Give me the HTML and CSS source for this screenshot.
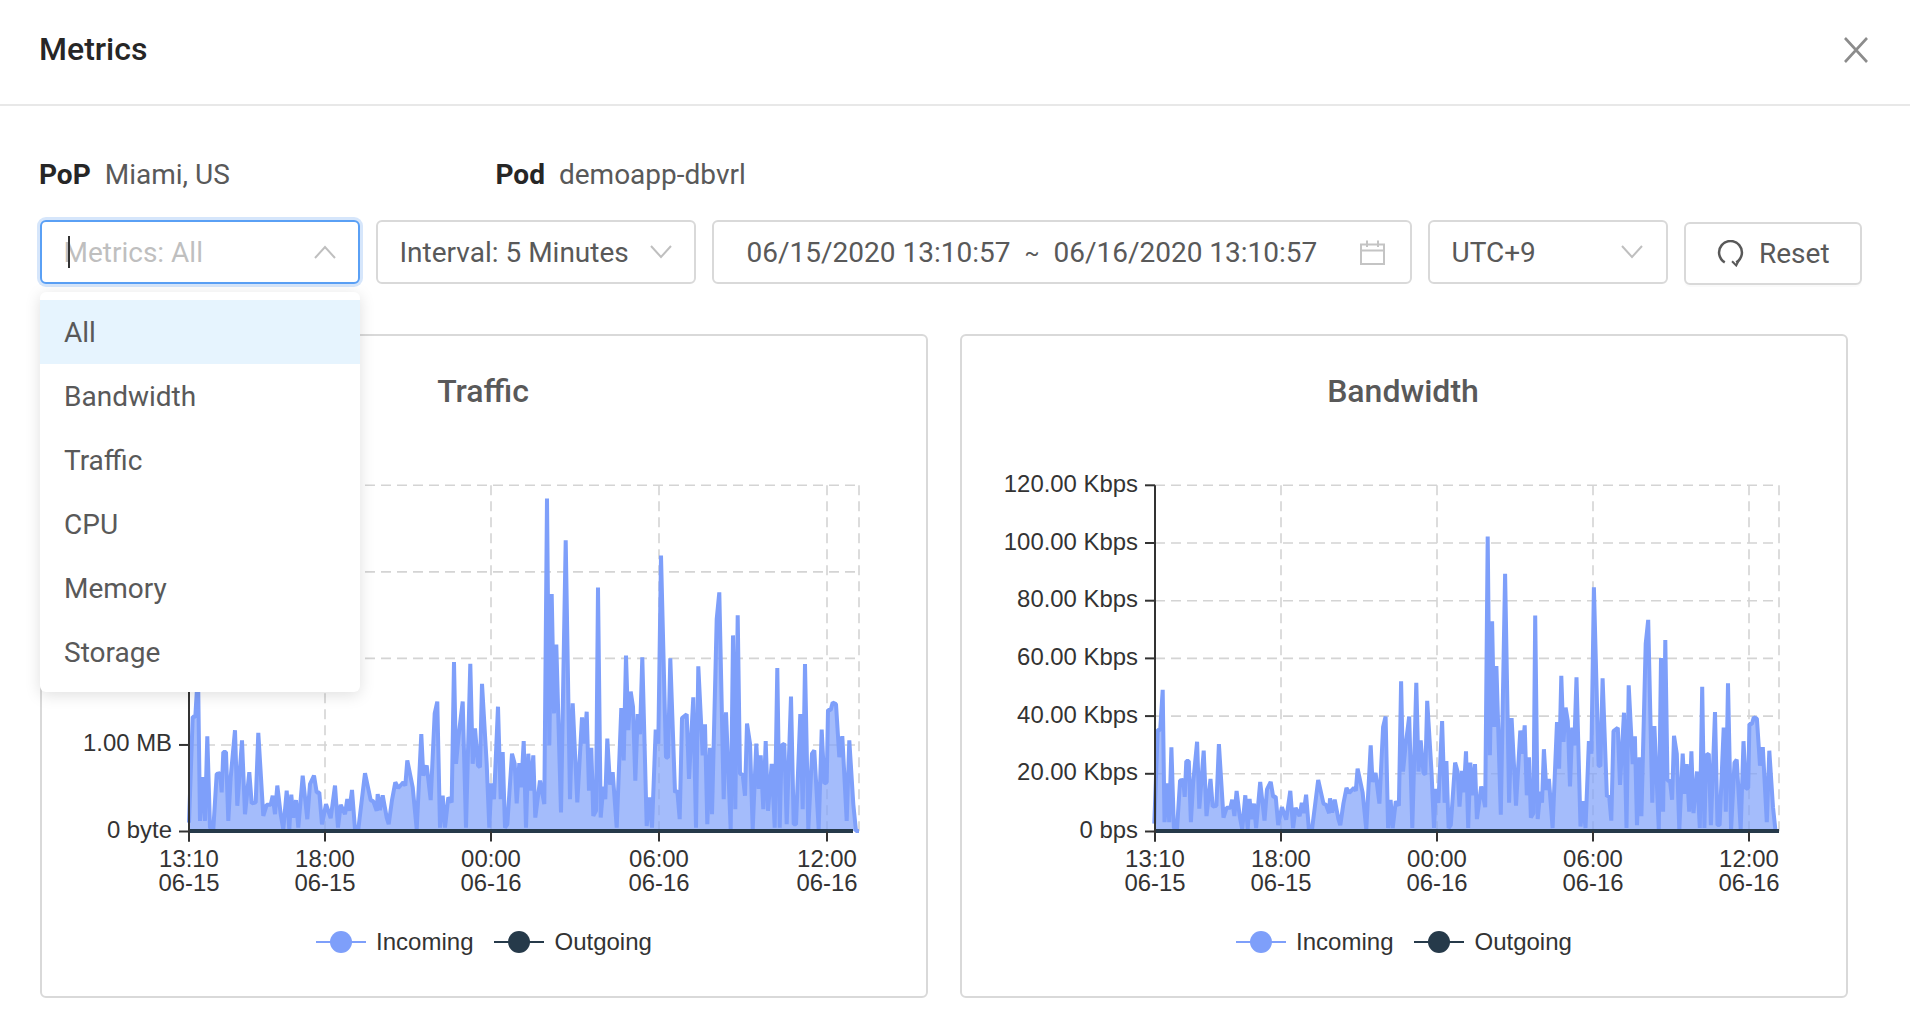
FILE: index.html
```html
<!DOCTYPE html>
<html lang="en">
<head>
<meta charset="utf-8">
<title>Metrics</title>
<link rel="stylesheet" href="styles.css">
</head>
<body>
<header class="modal-header">
  <h1 class="modal-title">Metrics</h1>
  <svg class="close-icon" viewBox="0 0 24 26" width="24" height="26" aria-label="Close">
    <path d="M1 1L23 25M23 1L1 25" fill="none" stroke="#8c8c8c" stroke-width="2.6"/>
  </svg>
</header>
<main class="modal-body">
  <div class="info-row">
    <div class="info-item info-pop"><span class="info-label">PoP</span><span class="info-value">Miami, US</span></div>
    <div class="info-item"><span class="info-label">Pod</span><span class="info-value">demoapp-dbvrl</span></div>
  </div>
  <div class="toolbar">
    <div class="control control-select control-focused">
      <span class="placeholder">Metrics: All</span>
      <span class="caret"></span>
      <svg class="chevron" viewBox="0 0 22 14" width="22" height="14"><path d="M1 13L11 2L21 13" fill="none" stroke="#bfbfbf" stroke-width="2"/></svg>
      <ul class="dropdown">
        <li class="dropdown-item dropdown-item-active">All</li>
        <li class="dropdown-item">Bandwidth</li>
        <li class="dropdown-item">Traffic</li>
        <li class="dropdown-item">CPU</li>
        <li class="dropdown-item">Memory</li>
        <li class="dropdown-item">Storage</li>
      </ul>
    </div>
    <div class="control control-select">
      <span class="control-text">Interval: 5 Minutes</span>
      <svg class="chevron" viewBox="0 0 22 14" width="22" height="14"><path d="M1 1L11 12L21 1" fill="none" stroke="#bfbfbf" stroke-width="2"/></svg>
    </div>
    <div class="control control-date">
      <span class="control-text">06/15/2020 13:10:57</span>
      <span class="date-sep">~</span>
      <span class="control-text">06/16/2020 13:10:57</span>
      <svg class="calendar" viewBox="0 0 25 25" width="25" height="25"><path d="M1 4.5H24V24H1ZM1 10.5H24M7 0.5V7M18 0.5V7" fill="none" stroke="#c4c4c4" stroke-width="2"/></svg>
    </div>
    <div class="control control-select control-tz">
      <span class="control-text">UTC+9</span>
      <svg class="chevron" viewBox="0 0 22 14" width="22" height="14"><path d="M1 1L11 12L21 1" fill="none" stroke="#bfbfbf" stroke-width="2"/></svg>
    </div>
    <button class="reset-button" type="button">
      <svg class="reset-icon" viewBox="0 0 26 26" width="27" height="27"><path d="M7.5 21.5A11 11 0 1 1 18.5 21.5" fill="none" stroke="#595959" stroke-width="2.4"/><path d="M21.5 18.5L18.5 24.5L14.5 20.5" fill="none" stroke="#595959" stroke-width="2"/></svg>
      <span>Reset</span>
    </button>
  </div>
  <div class="charts">
    <section class="card">
      <h2 class="card-title">Traffic</h2>
      <svg class="chart" id="chart-traffic" width="884" height="440"></svg>
      <div class="legend">
        <div class="legend-item"><span class="legend-mark legend-incoming"></span>Incoming</div>
        <div class="legend-item"><span class="legend-mark legend-outgoing"></span>Outgoing</div>
      </div>
    </section>
    <section class="card">
      <h2 class="card-title">Bandwidth</h2>
      <svg class="chart" id="chart-bandwidth" width="884" height="440"></svg>
      <div class="legend">
        <div class="legend-item"><span class="legend-mark legend-incoming"></span>Incoming</div>
        <div class="legend-item"><span class="legend-mark legend-outgoing"></span>Outgoing</div>
      </div>
    </section>
  </div>
</main>
<script src="chart.js"></script>
</body>
</html>
```
FILE: styles.css
```css
* { box-sizing: border-box; }
html, body { margin: 0; padding: 0; }
body {
  width: 1910px;
  height: 1028px;
  overflow: hidden;
  background: #fff;
  font-family: Roboto, "Noto Sans", sans-serif;
  font-size: 28px;
  color: #595959;
}
.modal-header {
  height: 106px;
  padding: 0 42px 0 39px;
  border-bottom: 2px solid #e8e8e8;
  display: flex;
  align-items: center;
  justify-content: space-between;
}
.modal-title {
  margin: 0 0 6px;
  font-size: 32px;
  font-weight: 500;
  color: #262626;
}
.close-icon { display: block; margin-bottom: 5px; }
.modal-body { padding: 48px 48px 0 40px; }
.info-row {
  display: flex;
  height: 40px;
  align-items: center;
  margin-left: -1px;
}
.info-item { display: flex; gap: 14px; }
.info-pop { width: 456.5px; }
.info-label { font-weight: 700; color: #262626; }
.toolbar {
  display: flex;
  align-items: flex-start;
  gap: 16px;
  margin-top: 26px;
}
.control {
  position: relative;
  height: 64px;
  border: 2px solid #d9d9d9;
  border-radius: 6px;
  display: flex;
  align-items: center;
  background: #fff;
}
.control-select {
  width: 320px;
  padding: 0 22px 0 21.5px;
  justify-content: space-between;
}
.control-focused {
  border-color: #5aa0f5;
  box-shadow: 0 0 0 3px #d6e6fb;
}
.control-date {
  width: 700px;
  padding: 0 25px 0 32.5px;
}
.control-tz { width: 240px; padding-right: 23px; }
.placeholder { color: #bfbfbf; }
.caret {
  position: absolute;
  left: 26px;
  top: 14px;
  width: 2px;
  height: 32px;
  background: #333;
}
.date-sep { width: 43px; text-align: center; font-size: 22px; }
.calendar { margin-left: auto; display: block; }
.chevron { display: block; flex: none; }
.dropdown {
  position: absolute;
  z-index: 2;
  top: 70px;
  left: -2px;
  width: 320px;
  height: 400px;
  margin: 0;
  padding: 8px 0;
  list-style: none;
  background: #fff;
  border-radius: 6px;
  box-shadow: 0 3px 16px rgba(0, 0, 0, .13);
}
.dropdown-item {
  height: 64px;
  line-height: 66px;
  padding-left: 24px;
}
.dropdown-item-active { background: #e6f4fe; }
.reset-button {
  width: 178px;
  height: 63px;
  margin-top: 2px;
  padding: 0 0 0 31px;
  border: 2px solid #d9d9d9;
  border-radius: 6px;
  background: #fff;
  box-shadow: 0 2px 0 rgba(0, 0, 0, .02);
  display: flex;
  align-items: center;
  gap: 15px;
  font: inherit;
  color: #595959;
}
.reset-icon { display: block; }
.charts {
  display: grid;
  grid-template-columns: 888px 888px;
  gap: 32px;
  margin-top: 49px;
}
.card {
  height: 664px;
  border: 2px solid #d9d9d9;
  border-radius: 6px;
  background: #fff;
}
.card-title {
  margin: 35px 0 0;
  padding-right: 2px;
  height: 40px;
  line-height: 40px;
  text-align: center;
  font-size: 32px;
  font-weight: 500;
  color: #595959;
}
.chart { display: block; margin-top: 60px; }
.chart text {
  font-family: "Liberation Sans", Arial, sans-serif;
  font-size: 23.9px;
  fill: #333;
}
.legend {
  display: flex;
  justify-content: center;
  gap: 21px;
  height: 44px;
  margin-top: 9px;
  font-family: "Liberation Sans", Arial, sans-serif;
  font-size: 24px;
  color: #333;
}
.legend-item { display: flex; align-items: center; gap: 10px; }
.legend-mark {
  position: relative;
  width: 50px;
  height: 2px;
}
.legend-mark::after {
  content: "";
  position: absolute;
  left: 14px;
  top: -10px;
  width: 22px;
  height: 22px;
  border-radius: 50%;
  background: inherit;
}
.legend-incoming { background: #7e9ffa; }
.legend-outgoing { background: #263a4a; }
```
FILE: chart.js
```js
// Incoming series as [x, height] pairs, in thirds of a pixel on the traffic chart.
var RAW = [
0,25,11,340,19,340,27,475,33,30,43,160,48,30,55,282,63,10,73,5,83,170,93,172,98,115,103,235,111,235,118,30,125,160,138,300,145,75,159,270,168,50,181,175,188,82,200,85,208,292,223,45,233,78,245,78,251,105,258,50,265,135,275,50,283,5,293,120,301,5,307,108,313,40,321,92,328,10,341,165,355,35,363,140,375,165,383,115,391,115,399,20,411,80,425,38,438,135,447,10,455,78,468,50,475,95,481,60,489,122,498,5,508,5,528,172,545,92,553,88,563,60,566,110,573,62,581,106,593,40,599,20,609,92,619,145,628,128,643,145,649,135,655,210,671,130,683,5,697,288,703,165,713,195,725,92,737,350,745,385,753,10,761,105,768,10,778,100,788,85,795,503,801,200,809,285,821,385,831,10,844,498,851,200,858,305,867,195,873,190,879,438,893,200,901,10,907,142,915,95,927,370,935,95,941,235,948,10,955,20,969,230,977,200,983,82,991,202,997,130,1004,268,1011,10,1018,230,1025,120,1033,225,1039,40,1053,150,1066,80,1074,990,1081,255,1088,705,1095,350,1102,555,1116,55,1130,865,1143,95,1151,380,1165,85,1179,338,1186,260,1193,355,1200,120,1207,248,1213,45,1221,60,1227,725,1235,40,1243,132,1249,95,1255,275,1263,138,1271,175,1283,10,1297,366,1304,210,1311,522,1318,300,1325,415,1332,370,1339,150,1346,348,1353,288,1360,517,1373,15,1381,100,1389,10,1400,302,1408,260,1416,820,1431,220,1437,218,1444,514,1458,115,1465,120,1472,35,1479,336,1493,347,1500,155,1513,398,1521,10,1528,490,1541,225,1548,318,1555,20,1563,248,1569,50,1583,630,1591,710,1604,95,1611,353,1625,5,1632,582,1639,65,1646,642,1653,170,1661,168,1668,105,1674,320,1683,260,1691,5,1702,260,1709,125,1715,225,1723,65,1730,268,1737,60,1748,200,1757,10,1765,485,1772,10,1778,255,1786,260,1793,20,1806,400,1814,20,1821,20,1834,348,1841,65,1848,497,1858,5,1869,230,1876,240,1889,5,1898,302,1906,142,1913,145,1917,360,1925,360,1931,382,1941,378,1951,220,1960,282,1973,30,1981,270,1993,80,2001,0,2010,0
];

var NS = "http://www.w3.org/2000/svg";

function el(parent, name, attrs, text) {
  var node = document.createElementNS(NS, name);
  for (var key in attrs) node.setAttribute(key, attrs[key]);
  if (text !== undefined) node.textContent = text;
  parent.appendChild(node);
  return node;
}

function draw(id, cfg) {
  var svg = document.getElementById(id);
  var sx = (cfg.right - cfg.left) / 2010;
  var zero = cfg.base - 0.5;
  var grid = { stroke: "#d4d4d4", "stroke-width": 1.6, "stroke-dasharray": "10 6", fill: "none" };
  var axis = { stroke: "#333", "stroke-width": 2 };

  cfg.yLabels.forEach(function (label, i) {
    var y = cfg.base - (cfg.base - cfg.top) * i / (cfg.yLabels.length - 1);
    if (i > 0) el(svg, "line", Object.assign({ x1: cfg.left, x2: cfg.right, y1: y, y2: y }, grid));
    el(svg, "line", Object.assign({ x1: cfg.left - 10, x2: cfg.left, y1: y, y2: y }, axis));
    if (label) el(svg, "text", { x: cfg.left - 17, y: y + 6.5, "text-anchor": "end" }, label);
  });
  cfg.xTicks.concat([{ x: cfg.right }]).forEach(function (tick) {
    if (tick.x !== cfg.left) el(svg, "line", Object.assign({ x1: tick.x, x2: tick.x, y1: cfg.top, y2: cfg.base }, grid));
  });

  var points = [];
  for (var i = 0; i < RAW.length; i += 2) {
    points.push((cfg.left + cfg.dx + RAW[i] * sx).toFixed(1) + "," + (zero - RAW[i + 1] * cfg.sy).toFixed(1));
  }
  var line = points.join(" ");
  el(svg, "polygon", {
    points: cfg.left + "," + zero + " " + line + " " + cfg.right + "," + zero,
    fill: "#7e9ffa", "fill-opacity": 0.7
  });
  el(svg, "polyline", { points: line, fill: "none", stroke: "#7e9ffa", "stroke-width": 4, "stroke-linejoin": "bevel" });
  el(svg, "line", { x1: cfg.left, x2: cfg.outEnd, y1: zero, y2: zero, stroke: "#263a4a", "stroke-width": 4 });
  el(svg, "line", Object.assign({ x1: cfg.left, x2: cfg.left, y1: cfg.top, y2: cfg.base + 10 }, axis));

  cfg.xTicks.forEach(function (tick) {
    el(svg, "line", Object.assign({ x1: tick.x, x2: tick.x, y1: cfg.base, y2: cfg.base + 10 }, axis));
    el(svg, "text", { x: tick.x, y: cfg.base + 35, "text-anchor": "middle" }, tick.time);
    el(svg, "text", { x: tick.x, y: cfg.base + 59.5, "text-anchor": "middle" }, tick.date);
  });
}

// Labels for 2.00 MB and up sit behind the open dropdown, so they are left out.
draw("chart-traffic", {
  left: 147, right: 817, top: 14.3, base: 360.5, sy: 0.336, dx: 0, outEnd: 811,
  yLabels: ["0 byte", "1.00 MB", "", "", ""],
  xTicks: [
    { x: 147, time: "13:10", date: "06-15" },
    { x: 283, time: "18:00", date: "06-15" },
    { x: 449, time: "00:00", date: "06-16" },
    { x: 617, time: "06:00", date: "06-16" },
    { x: 785, time: "12:00", date: "06-16" }
  ]
});

draw("chart-bandwidth", {
  left: 193, right: 817, top: 14.3, base: 360.5, sy: 0.892 / 3, dx: -0.7, outEnd: 817,
  yLabels: ["0 bps", "20.00 Kbps", "40.00 Kbps", "60.00 Kbps", "80.00 Kbps", "100.00 Kbps", "120.00 Kbps"],
  xTicks: [
    { x: 193, time: "13:10", date: "06-15" },
    { x: 319, time: "18:00", date: "06-15" },
    { x: 475, time: "00:00", date: "06-16" },
    { x: 631, time: "06:00", date: "06-16" },
    { x: 787, time: "12:00", date: "06-16" }
  ]
});
```
